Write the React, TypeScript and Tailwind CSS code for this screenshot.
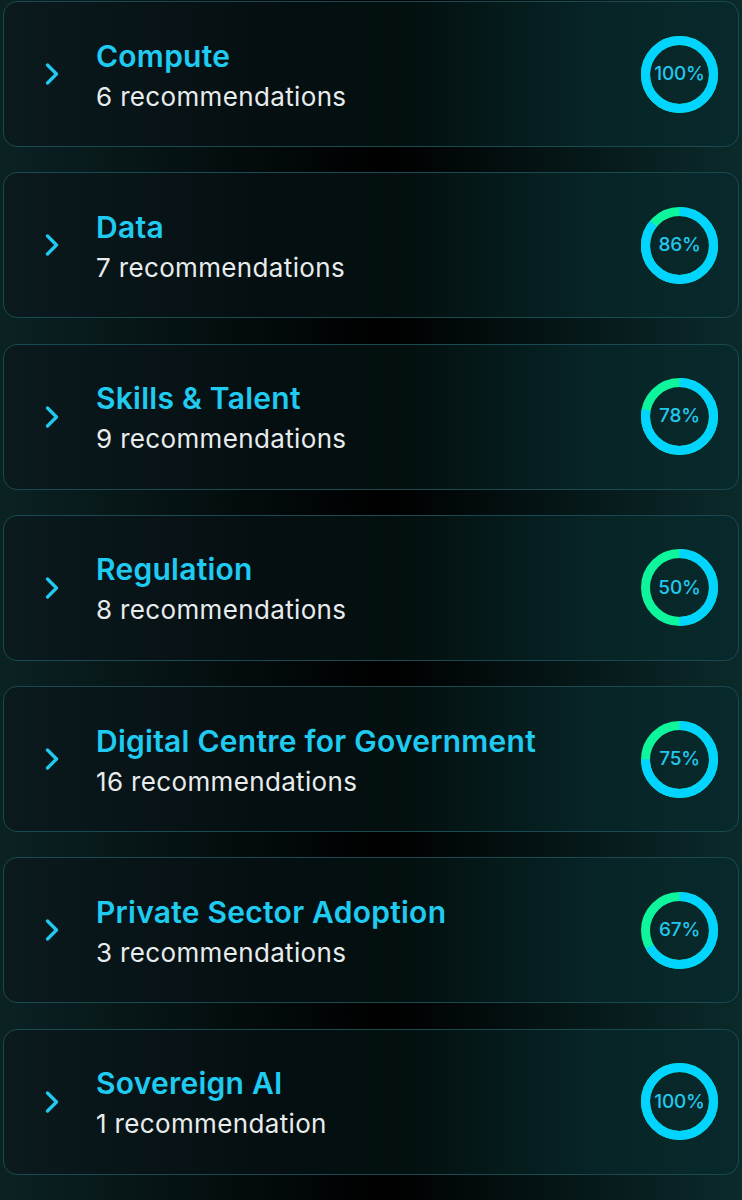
import React from "react";

const items = [
  { title: "Compute", sub: "6 recommendations", pct: 100 },
  { title: "Data", sub: "7 recommendations", pct: 86 },
  { title: "Skills & Talent", sub: "9 recommendations", pct: 78 },
  { title: "Regulation", sub: "8 recommendations", pct: 50 },
  { title: "Digital Centre for Government", sub: "16 recommendations", pct: 75 },
  { title: "Private Sector Adoption", sub: "3 recommendations", pct: 67 },
  { title: "Sovereign AI", sub: "1 recommendation", pct: 100 },
];

function Ring({ pct }: { pct: number }) {
  const r = 34;
  const c = 2 * Math.PI * r;
  return (
    <div className="relative w-[77px] h-[77px] flex items-center justify-center">
      <svg width="77" height="77" viewBox="0 0 77 77" className="absolute inset-0">
        <circle cx="38.5" cy="38.5" r={r} fill="none" stroke="#0ff59c" strokeWidth="9" />
        <circle
          cx="38.5"
          cy="38.5"
          r={r}
          fill="none"
          stroke="#00d4ff"
          strokeWidth="9"
          strokeDasharray={`${(c * pct) / 100} ${c}`}
          transform="rotate(-90 38.5 38.5)"
        />
      </svg>
      <span className="relative text-[19px] font-medium text-[#22c8ee] tracking-[-0.2px] [font-family:Inter,'Noto_Sans',sans-serif]">
        {pct}%
      </span>
    </div>
  );
}

function Chevron() {
  return (
    <svg width="36" height="36" viewBox="0 0 24 24" fill="none" stroke="#1fc9f0" strokeWidth="2.2" strokeLinecap="round" strokeLinejoin="round">
      <path d="m9 18 6-6-6-6" />
    </svg>
  );
}

export default function App() {
  return (
    <div className="min-h-[1200px] w-full bg-[linear-gradient(to_right,#0b2223_0%,#040e0f_30%,#000000_52%,#051516_75%,#0c2a2b_100%)] px-[3px] pt-[1px] [font-family:Inter,'Noto_Sans',sans-serif]">
      <div className="flex flex-col gap-[25.3px]">
        {items.map((it) => (
          <div
            key={it.title}
            className="h-[146px] rounded-[14px] border border-[#184a50] bg-[linear-gradient(to_right,#0b1a1d_0%,#050f12_35%,#03100f_55%,#072426_80%,#082a2c_100%)] flex items-center pl-[30px] pr-[20px]"
          >
            <div className="w-[62px] flex items-center">
              <Chevron />
            </div>
            <div className="flex-1 flex flex-col pt-[4px]">
              <div className="text-[30px] leading-[36px] font-semibold text-[#1fcbf0] tracking-[0.25px]">{it.title}</div>
              <div className="text-[26px] leading-[36px] mt-[5px] text-[#e8ecec] tracking-[0.35px]">{it.sub}</div>
            </div>
            <Ring pct={it.pct} />
          </div>
        ))}
      </div>
    </div>
  );
}
